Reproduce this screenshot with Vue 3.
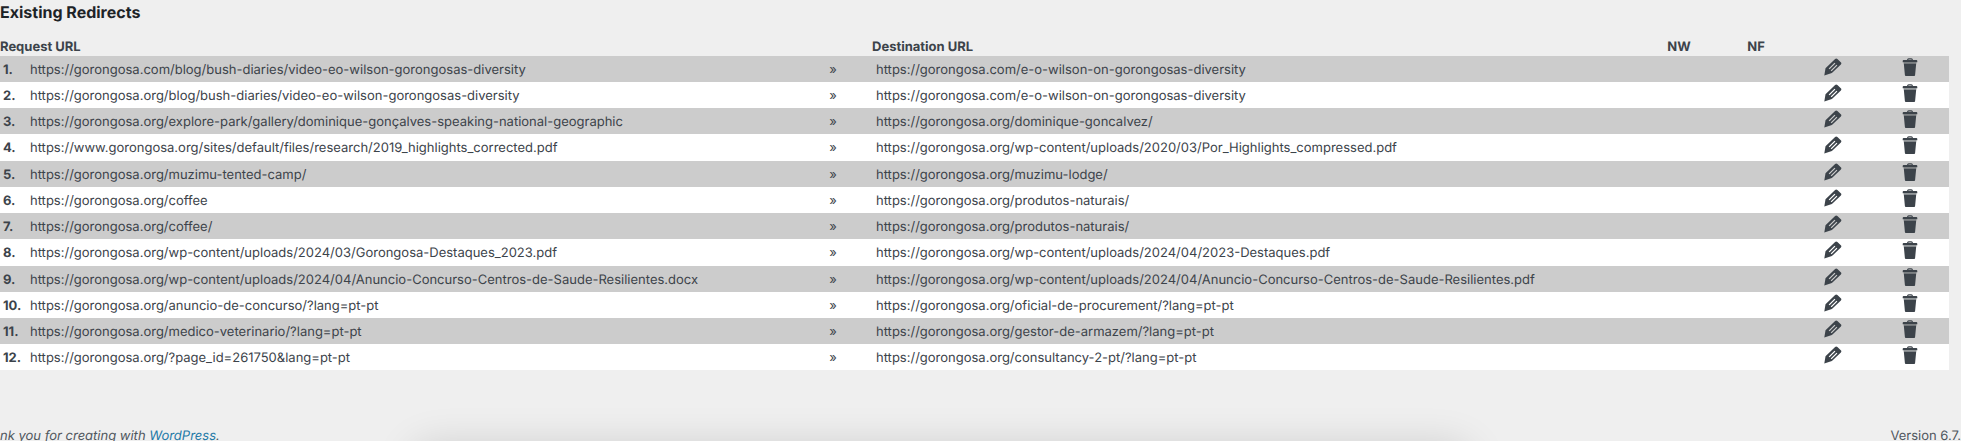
<script setup>
const site = 'https://gorongosa.org/'
const redirects = [
  ['https://gorongosa.com/blog/bush-diaries/video-eo-wilson-gorongosas-diversity', 'https://gorongosa.com/e-o-wilson-on-gorongosas-diversity'],
  [site + 'blog/bush-diaries/video-eo-wilson-gorongosas-diversity', 'https://gorongosa.com/e-o-wilson-on-gorongosas-diversity'],
  [site + 'explore-park/gallery/dominique-gonçalves-speaking-national-geographic', site + 'dominique-goncalvez/'],
  ['https://www.gorongosa.org/sites/default/files/research/2019_highlights_corrected.pdf', site + 'wp-content/uploads/2020/03/Por_Highlights_compressed.pdf'],
  [site + 'muzimu-tented-camp/', site + 'muzimu-lodge/'],
  [site + 'coffee', site + 'produtos-naturais/'],
  [site + 'coffee/', site + 'produtos-naturais/'],
  [site + 'wp-content/uploads/2024/03/Gorongosa-Destaques_2023.pdf', site + 'wp-content/uploads/2024/04/2023-Destaques.pdf'],
  [site + 'wp-content/uploads/2024/04/Anuncio-Concurso-Centros-de-Saude-Resilientes.docx', site + 'wp-content/uploads/2024/04/Anuncio-Concurso-Centros-de-Saude-Resilientes.pdf'],
  [site + 'anuncio-de-concurso/?lang=pt-pt', site + 'oficial-de-procurement/?lang=pt-pt'],
  [site + 'medico-veterinario/?lang=pt-pt', site + 'gestor-de-armazem/?lang=pt-pt'],
  [site + '?page_id=261750&lang=pt-pt', site + 'consultancy-2-pt/?lang=pt-pt'],
]
</script>

<template>
  <div class="page">
    <main>
      <h2>Existing Redirects</h2>
      <table>
        <colgroup>
          <col class="c-num" />
          <col />
          <col class="c-small" />
          <col />
          <col class="c-small" />
          <col class="c-small" />
          <col class="c-small" />
          <col class="c-small" />
        </colgroup>
        <thead>
          <tr>
            <th colspan="2">Request URL</th>
            <th></th>
            <th>Destination URL</th>
            <th class="center">NW</th>
            <th class="center">NF</th>
            <th></th>
            <th></th>
          </tr>
        </thead>
        <tbody>
          <tr v-for="(r, i) in redirects" :key="i">
            <td class="num">{{ i + 1 }}.</td>
            <td class="url">{{ r[0] }}</td>
            <td class="center">»</td>
            <td class="url">{{ r[1] }}</td>
            <td></td>
            <td></td>
            <td class="action">
              <button type="button" aria-label="Edit">
                <svg width="18" height="18" viewBox="0 0 18 18">
                  <path fill="currentColor" fill-rule="evenodd" d="M11.1.9Q12.2-.1 13.4.9L16.8 4.2Q17.9 5.3 16.9 6.4L7.9 15.1.3 17.5 1.5 10.2ZM10.5 4.7 4.7 10.4 5.6 11.3 11.4 5.6ZM12.5 6.7 6.7 12.4 7.6 13.3 13.4 7.6Z" />
                </svg>
              </button>
            </td>
            <td class="action">
              <button type="button" aria-label="Delete">
                <svg width="16" height="18" viewBox="0 0 16 18">
                  <path fill="none" stroke="currentColor" stroke-width="1.2" d="M5.7 2.4V1.8Q5.7.8 6.7.8H9.3Q10.3.8 10.3 1.8V2.4" />
                  <path fill="currentColor" d="M1.6 2H14.4Q15.3 2 15.3 3V4.2H.7V3Q.7 2 1.6 2ZM1.8 5.5H14.2L13.1 17Q13 18 12.2 18H3.8Q3 18 2.9 17Z" />
                  <path fill="currentColor" opacity=".5" d="M1.6 4.2H14.4V5.5H1.6Z" />
                </svg>
              </button>
            </td>
          </tr>
        </tbody>
      </table>
    </main>
    <footer>
      <em>nk you for creating with <a href="#">WordPress</a>.</em>
      <span>Version 6.7.</span>
    </footer>
    <div class="dock"></div>
  </div>
</template>

<style>
body {
  margin: 0;
  background: #efefef;
  overflow: hidden;
}
</style>

<style scoped>
.page {
  color: #3c434a;
  font: 13px/20px Inter, "Liberation Sans", sans-serif;
  text-rendering: geometricPrecision;
  white-space: nowrap;
}
main {
  padding-right: 12px;
}
h2 {
  margin: 0;
  padding-bottom: 12px;
  color: #1d2327;
  font-size: 16px;
  line-height: 24px;
  font-weight: 700;
}
table {
  width: 100%;
  table-layout: fixed;
  border-collapse: collapse;
}
.c-num {
  width: 26px;
}
.c-small {
  width: 77px;
}
th {
  padding: 2px 0 0;
  text-align: left;
  line-height: 18px;
  font-weight: 700;
}
td {
  box-sizing: border-box;
  height: 26px;
  padding: 1px 0 0;
}
tr:nth-child(4n):not(:last-child) td {
  height: 27px;
}
tbody tr {
  background: #fff;
}
tbody tr:nth-child(odd) {
  background: #ccc;
}
.num {
  padding-left: 3px;
  font-weight: 700;
}
.url {
  padding-left: 4px;
}
.center {
  padding-right: 1px;
  text-align: center;
}
.action {
  padding-right: 1px;
  vertical-align: top;
}
button {
  display: flex;
  justify-content: center;
  width: 100%;
  padding: 1px 0 0;
  border: 0;
  background: none;
  color: #3c434a;
  cursor: pointer;
}
footer {
  display: flex;
  justify-content: space-between;
  padding-top: 56px;
  color: #50575e;
}
a {
  color: #1f7aa8;
  text-decoration: none;
}
.dock {
  position: fixed;
  top: 100%;
  left: 21%;
  right: 25%;
  height: 60px;
  border-radius: 20px;
  box-shadow: 0 4px 40px rgba(0, 0, 0, 0.14);
}
</style>
